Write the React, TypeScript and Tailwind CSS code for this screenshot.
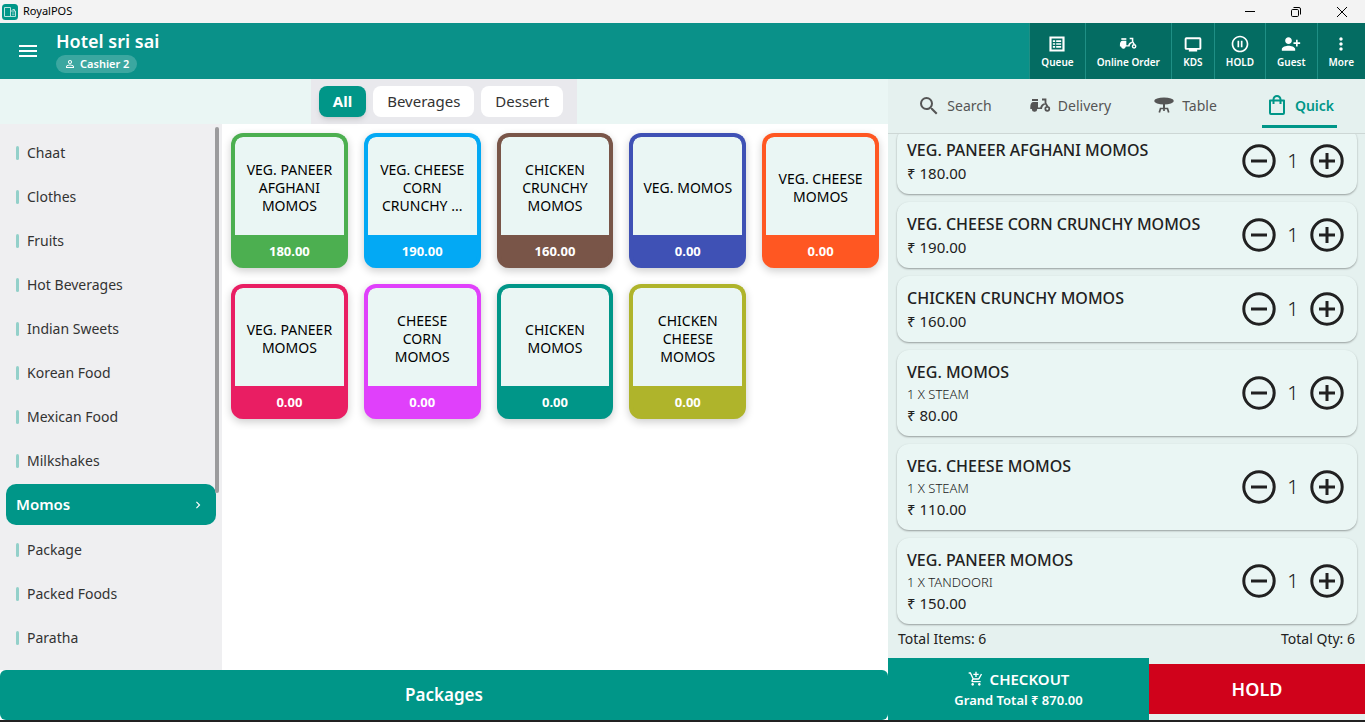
import { useState } from "react"
import {
  MdAddShoppingCart,
  MdChevronRight,
  MdMenu,
  MdMoreVert,
  MdOutlinePersonOutline,
  MdPauseCircleOutline,
  MdPersonAddAlt1,
  MdSearch,
} from "react-icons/md"

const CATEGORIES = [
  "Chaat",
  "Clothes",
  "Fruits",
  "Hot Beverages",
  "Indian Sweets",
  "Korean Food",
  "Mexican Food",
  "Milkshakes",
  "Momos",
  "Package",
  "Packed Foods",
  "Paratha",
]

const PRODUCTS = [
  { name: "VEG. PANEER AFGHANI MOMOS", price: "180.00", color: "border-[#4caf50] bg-[#4caf50]" },
  { name: "VEG. CHEESE CORN CRUNCHY ...", price: "190.00", color: "border-[#03a9f4] bg-[#03a9f4]" },
  { name: "CHICKEN CRUNCHY MOMOS", price: "160.00", color: "border-[#795548] bg-[#795548]" },
  { name: "VEG. MOMOS", price: "0.00", color: "border-[#3f51b5] bg-[#3f51b5]" },
  { name: "VEG. CHEESE MOMOS", price: "0.00", color: "border-[#ff5722] bg-[#ff5722]" },
  { name: "VEG. PANEER MOMOS", price: "0.00", color: "border-[#e91e63] bg-[#e91e63]" },
  { name: "CHEESE CORN MOMOS", price: "0.00", color: "border-[#e040fb] bg-[#e040fb]" },
  { name: "CHICKEN MOMOS", price: "0.00", color: "border-[#009688] bg-[#009688]" },
  { name: "CHICKEN CHEESE MOMOS", price: "0.00", color: "border-[#afb42b] bg-[#afb42b]" },
]

const CART = [
  { name: "VEG. PANEER AFGHANI MOMOS", price: "180.00" },
  { name: "VEG. CHEESE CORN CRUNCHY MOMOS", price: "190.00" },
  { name: "CHICKEN CRUNCHY MOMOS", price: "160.00" },
  { name: "VEG. MOMOS", note: "1 X STEAM", price: "80.00" },
  { name: "VEG. CHEESE MOMOS", note: "1 X STEAM", price: "110.00" },
  { name: "VEG. PANEER MOMOS", note: "1 X TANDOORI", price: "150.00" },
]

type IconProps = { className?: string }

function QueueIcon({ className }: IconProps) {
  return (
    <svg viewBox="0 0 24 24" className={className} fill="none" stroke="currentColor">
      <path d="M4.200 4.200h15.600v15.600H4.200z" strokeWidth="2.600" />
      <path d="M7 8.500h2.800M11 8.500h6M7 12h2.800M11 12h6M7 15.500h2.800M11 15.500h6" strokeWidth="2" />
    </svg>
  )
}

function ScooterIcon({ className }: IconProps) {
  return (
    <svg viewBox="0 0 24 24" className={className} fill="currentColor">
      <path d="M4 5h6v2H4z" />
      <path d="M5.500 8H10v5.500h2.200c.4-2.300 2-3.800 4.300-4.300l.5 1.500c-1.800.6-2.800 2-3 4.300H9.300a2.900 2.900 0 0 1-5.600 0H2.300v-2c0-3 1-5 3.200-5z" />
      <circle cx="6.500" cy="15.300" r="2.500" />
      <path d="M14 5.500h3.500v3.700l2 3.300" fill="none" stroke="currentColor" strokeWidth="1.800" />
      <circle cx="19.300" cy="14.800" r="2" fill="none" stroke="currentColor" strokeWidth="1.700" />
    </svg>
  )
}

function TableIcon({ className }: IconProps) {
  return (
    <svg viewBox="0 0 24 24" className={className} fill="currentColor">
      <ellipse cx="12" cy="7" rx="9.800" ry="3.400" />
      <path d="M11 9h2v5h-2z" />
      <path d="M7.300 18.500 8.500 14.500h7l1.200 4M12 13v4" fill="none" stroke="currentColor" strokeWidth="1.700" />
    </svg>
  )
}

function MonitorIcon({ className }: IconProps) {
  return (
    <svg viewBox="0 0 24 24" className={className} fill="currentColor">
      <path d="M4 4h16a2 2 0 0 1 2 2v11a2 2 0 0 1-2 2h-3v2H7v-2H4a2 2 0 0 1-2-2V6a2 2 0 0 1 2-2zm.300 2.300v10.400h15.400V6.300z" />
    </svg>
  )
}

function BagIcon({ className }: IconProps) {
  return (
    <svg viewBox="0 0 24 24" className={className} fill="none" stroke="currentColor" strokeWidth="2">
      <path d="M5 6.500h14V19a1 1 0 0 1-1 1H6a1 1 0 0 1-1-1z" strokeLinejoin="round" />
      <path d="M8.500 10V5.500a3.500 3.500 0 0 1 7 0V10" />
    </svg>
  )
}

function AppLogo() {
  return (
    <svg viewBox="0 0 16 16" className="size-4 shrink-0">
      <rect width="16" height="16" rx="3.500" fill="#009688" />
      <path d="M2.500 3.500h6v9h-6zM8.500 12.500h5V7h-5zM10.500 5.500h2V7" fill="none" stroke="#b9e3df" />
      <path d="M10 9h2.500M10 10.700h2.500" stroke="#b9e3df" strokeWidth=".7" />
    </svg>
  )
}

const ACTIONS = [
  { label: "Queue", Icon: QueueIcon },
  { label: "Online Order", Icon: ScooterIcon },
  { label: "KDS", Icon: MonitorIcon },
  { label: "HOLD", Icon: MdPauseCircleOutline },
  { label: "Guest", Icon: MdPersonAddAlt1 },
  { label: "More", Icon: MdMoreVert },
]

const MODES = [
  { label: "Search", Icon: MdSearch },
  { label: "Delivery", Icon: ScooterIcon },
  { label: "Table", Icon: TableIcon },
  { label: "Quick", Icon: BagIcon },
]

function QtyButton({ label, plus, onClick }: { label: string; plus?: boolean; onClick: () => void }) {
  return (
    <button type="button" aria-label={label} onClick={onClick} className="size-9 text-[#212121]">
      <svg viewBox="0 0 36 36" fill="none" stroke="currentColor" strokeWidth="3">
        <circle cx="18" cy="18" r="15.200" />
        <path d={plus ? "M10 18h16M18 10v16" : "M10 18h16"} />
      </svg>
    </button>
  )
}

export default function App() {
  const [group, setGroup] = useState("All")
  const [category, setCategory] = useState("Momos")
  const [mode, setMode] = useState("Quick")
  const [qty, setQty] = useState(CART.map(() => 1))

  function changeQty(index: number, by: number) {
    setQty(prev => prev.map((q, i) => (i === index ? Math.max(0, q + by) : q)))
  }

  return (
    <div className="flex h-screen flex-col overflow-hidden border-b-2 border-[#212121] bg-white font-['Noto_Sans','Liberation_Sans',sans-serif] text-[#212121]">
      {/* Window title bar */}
      <div className="flex h-[23px] shrink-0 items-center bg-[#f3f3f3] pl-0.5 text-black">
        <AppLogo />
        <span className="ml-[5px] text-[11px]">RoyalPOS</span>
        <div className="ml-auto flex">
          <button type="button" aria-label="Minimize" className="flex w-[46px] justify-center">
            <svg viewBox="0 0 12 12" className="size-3" stroke="currentColor" fill="none">
              <path d="M1 5.500h10" />
            </svg>
          </button>
          <button type="button" aria-label="Restore" className="flex w-[46px] justify-center">
            <svg viewBox="0 0 12 12" className="size-3" stroke="currentColor" fill="none">
              <rect x="1.500" y="3.500" width="7" height="7" rx="1.200" />
              <path d="M3.500 1.500H9a1.500 1.500 0 0 1 1.500 1.500v5.500" />
            </svg>
          </button>
          <button type="button" aria-label="Close" className="flex w-[46px] justify-center">
            <svg viewBox="0 0 12 12" className="size-3" stroke="currentColor" fill="none">
              <path d="m1 1 10 10M11 1 1 11" />
            </svg>
          </button>
        </div>
      </div>

      {/* Header */}
      <header className="flex h-14 shrink-0 items-stretch bg-[#0a9189] text-white">
        <button type="button" aria-label="Menu" className="ml-4 self-center">
          <MdMenu className="size-6" />
        </button>
        <div className="ml-4 flex flex-col items-start pt-1">
          <h1 className="text-lg leading-7 font-semibold">Hotel sri sai</h1>
          <span className="flex h-[18px] items-center gap-1 rounded-full bg-white/20 px-2 text-[11px] font-semibold">
            <MdOutlinePersonOutline className="size-3" />
            Cashier 2
          </span>
        </div>
        <nav className="ml-auto flex bg-[#046c62]">
          {ACTIONS.map(({ label, Icon }) => (
            <button
              key={label}
              type="button"
              className="flex flex-col items-center justify-center border-l border-[#1f8f85] px-[11px] pt-0.5 text-[10px] leading-4 font-semibold"
            >
              <Icon className="size-5" />
              {label}
            </button>
          ))}
        </nav>
      </header>

      <div className="flex min-h-0 flex-1">
        <main className="flex min-w-0 flex-1 flex-col">
          {/* Groups */}
          <div className="flex h-[45px] shrink-0 justify-center bg-[#eaf6f4]">
            <div className="flex items-center gap-[7px] bg-[#e9e9ed] pr-3.5 pl-2">
              {["All", "Beverages", "Dessert"].map(name => (
                <button
                  key={name}
                  type="button"
                  onClick={() => setGroup(name)}
                  className={`h-[31px] rounded-lg px-3.5 text-[15px] ${
                    group === name ? "bg-[#009688] font-bold text-white shadow-md" : "bg-white text-[#333]"
                  }`}
                >
                  {name}
                </button>
              ))}
            </div>
          </div>

          <div className="flex min-h-0 flex-1">
            {/* Categories */}
            <aside className="flex w-[222px] shrink-0 overflow-hidden bg-[#efeff1]">
              <ul className="w-[216px] shrink-0 pt-[7px] pl-1.5">
                {CATEGORIES.map(name => (
                  <li key={name}>
                    {category === name ? (
                      <button
                        type="button"
                        className="mt-px mb-[3px] flex h-[41px] w-full items-center justify-between rounded-[10px] bg-[#009688] pr-[11px] pl-2.5 text-[15px] font-semibold text-white"
                      >
                        {name}
                        <MdChevronRight className="size-3.5" />
                      </button>
                    ) : (
                      <button
                        type="button"
                        onClick={() => setCategory(name)}
                        className="flex h-11 w-full items-center gap-2 pl-2.5 text-sm text-[#333]"
                      >
                        <span className="h-3.5 w-[3px] rounded-sm bg-[#93d0ca]" />
                        {name}
                      </button>
                    )}
                  </li>
                ))}
              </ul>
              <div className="mt-[3px] -ml-px h-[366px] w-1 rounded-full bg-[#9b9b9d]" />
            </aside>

            {/* Products */}
            <section className="grid flex-1 grid-cols-5 content-start gap-4 px-[9px] pt-[9px]">
              {PRODUCTS.map(item => (
                <button
                  key={item.name}
                  type="button"
                  className={`flex h-[135px] flex-col overflow-hidden rounded-xl border-4 border-b-0 shadow-[0_3px_8px_rgba(0,0,0,0.2)] ${item.color}`}
                >
                  <span className="flex w-full flex-1 items-center justify-center rounded-t-lg bg-[#eaf6f4] px-[9px] pt-1 text-sm leading-[18px] text-black">
                    {item.name}
                  </span>
                  <span className="flex h-[33px] w-full items-center justify-center text-[13px] font-bold text-white">
                    {item.price}
                  </span>
                </button>
              ))}
            </section>
          </div>

          <button type="button" className="h-[50px] shrink-0 rounded-md bg-[#009688] text-[17px] font-semibold text-white">
            Packages
          </button>
        </main>

        {/* Order */}
        <aside className="flex w-[477px] shrink-0 flex-col bg-[#e5f1ef]">
          <div className="flex h-[55px] shrink-0 border-b border-[#cdd7d5] pr-2 pl-[9px]">
            {MODES.map(({ label, Icon }) => (
              <button
                key={label}
                type="button"
                onClick={() => setMode(label)}
                className="flex flex-1 justify-center pb-[5px] text-sm"
              >
                <span
                  className={`flex h-full items-center gap-1.5 border-b-3 px-[3px] pt-2 ${
                    mode === label
                      ? "border-[#009688] font-semibold text-[#009688]"
                      : "border-transparent text-[#555]"
                  }`}
                >
                  <Icon className="size-6" />
                  {label}
                </span>
              </button>
            ))}
          </div>

          <ul className="flex min-h-0 flex-1 flex-col justify-end gap-2 overflow-hidden pr-2 pb-[3px] pl-[9px]">
            {CART.map((item, i) => (
              <li
                key={item.name}
                className="flex shrink-0 items-center rounded-xl bg-[#eaf6f4] py-2 pr-3 pl-2.5 shadow-[0_1px_2px_rgba(0,0,0,0.35)]"
              >
                <div className="flex-1 pt-0.5 pb-0.5">
                  <p className="text-base leading-6 font-medium">{item.name}</p>
                  {item.note && <p className="text-[13px] leading-5 font-light">{item.note}</p>}
                  <p className="text-[15px] leading-[22px]">₹ {item.price}</p>
                </div>
                <QtyButton label={`Remove one ${item.name}`} onClick={() => changeQty(i, -1)} />
                <span className="w-8 text-center text-xl font-light">{qty[i]}</span>
                <QtyButton plus label={`Add one ${item.name}`} onClick={() => changeQty(i, 1)} />
              </li>
            ))}
          </ul>

          <div className="flex h-[31px] shrink-0 justify-between px-2.5 pt-0.5 text-sm">
            <span>Total Items: {CART.length}</span>
            <span>Total Qty: {qty.reduce((a, b) => a + b, 0)}</span>
          </div>
          <div className="flex h-[62px] shrink-0">
            <button
              type="button"
              className="flex w-[261px] flex-col items-center justify-center bg-[#009688] font-semibold text-white"
            >
              <span className="flex items-center gap-1.5 text-[15px]">
                <MdAddShoppingCart className="size-4" />
                CHECKOUT
              </span>
              <span className="text-[13px]">Grand Total ₹ 870.00</span>
            </button>
            <button type="button" className="my-1.5 flex-1 bg-[#d0021b] text-lg font-semibold text-white">
              HOLD
            </button>
          </div>
        </aside>
      </div>
    </div>
  )
}
